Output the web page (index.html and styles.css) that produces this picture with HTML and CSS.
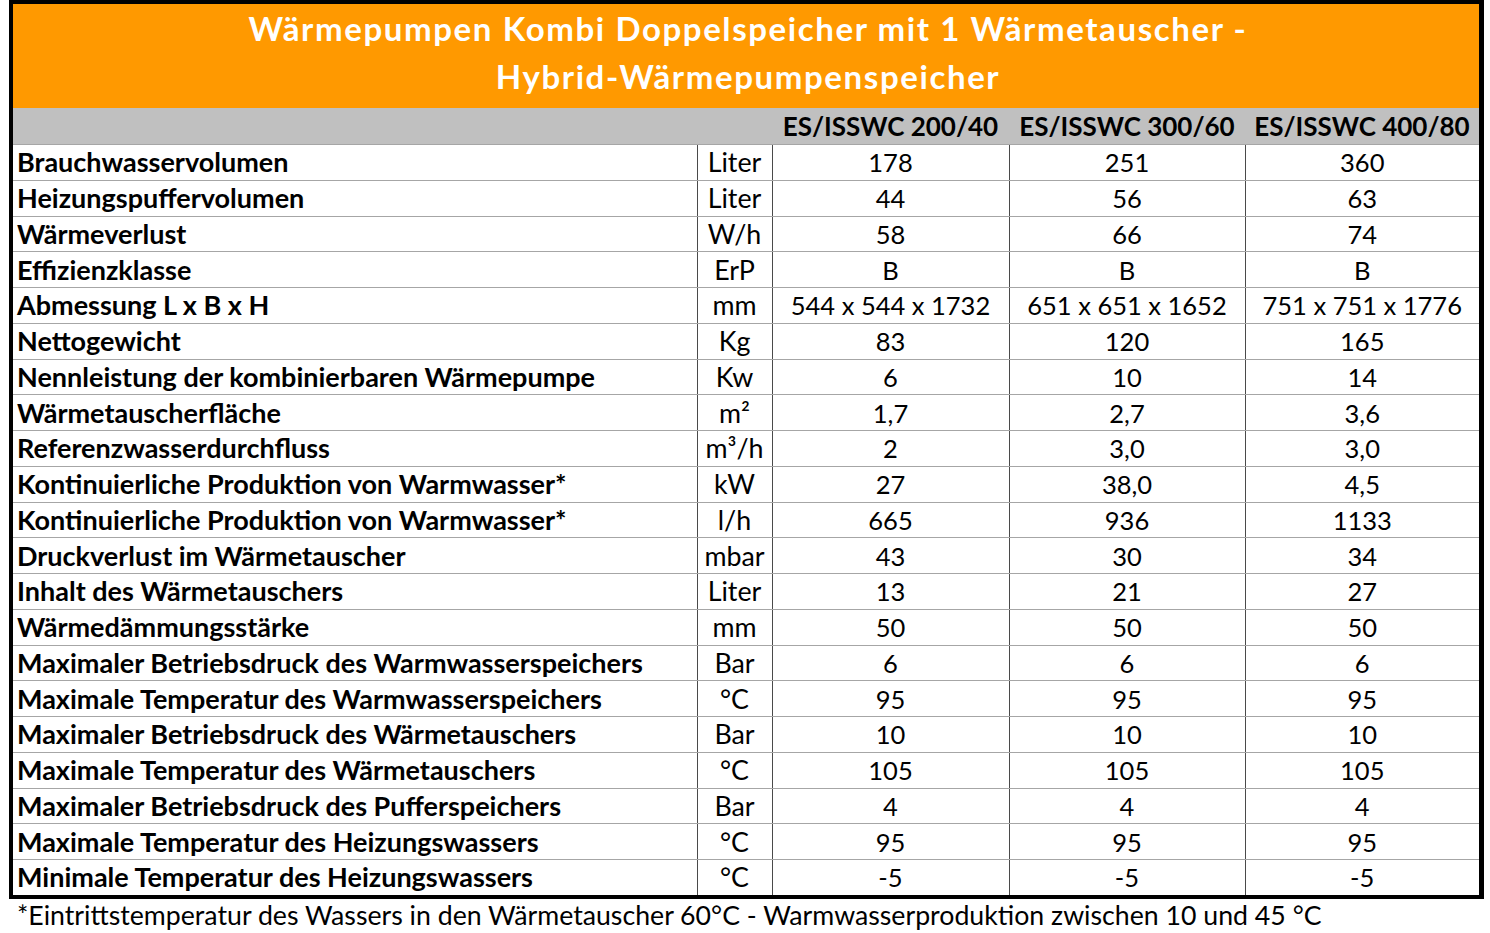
FILE: index.html
```html
<!DOCTYPE html>
<html lang="de">
<head>
<meta charset="utf-8">
<title>Wärmepumpen Kombi Doppelspeicher</title>
<link rel="stylesheet" href="styles.css">
</head>
<body>
<div class="sheet">
  <div class="frame">
    <div class="title">Wärmepumpen Kombi Doppelspeicher mit 1 Wärmetauscher -<br>Hybrid-Wärmepumpenspeicher</div>
    <table class="spec">
      <colgroup>
        <col class="c-label"><col class="c-unit"><col class="c-v1"><col class="c-v2"><col class="c-v3">
      </colgroup>
      <thead>
        <tr class="head">
          <th></th><th></th><th>ES/ISSWC 200/40</th><th>ES/ISSWC 300/60</th><th>ES/ISSWC 400/80</th>
        </tr>
      </thead>
      <tbody>
        <tr><td class="label">Brauchwasservolumen</td><td class="unit">Liter</td><td>178</td><td>251</td><td>360</td></tr>
        <tr><td class="label">Heizungspuffervolumen</td><td class="unit">Liter</td><td>44</td><td>56</td><td>63</td></tr>
        <tr><td class="label">Wärmeverlust</td><td class="unit">W/h</td><td>58</td><td>66</td><td>74</td></tr>
        <tr><td class="label">Effizienzklasse</td><td class="unit">ErP</td><td>B</td><td>B</td><td>B</td></tr>
        <tr><td class="label">Abmessung L x B x H</td><td class="unit">mm</td><td>544 x 544 x 1732</td><td>651 x 651 x 1652</td><td>751 x 751 x 1776</td></tr>
        <tr><td class="label">Nettogewicht</td><td class="unit">Kg</td><td>83</td><td>120</td><td>165</td></tr>
        <tr><td class="label">Nennleistung der kombinierbaren Wärmepumpe</td><td class="unit">Kw</td><td>6</td><td>10</td><td>14</td></tr>
        <tr><td class="label">Wärmetauscherfläche</td><td class="unit">m²</td><td>1,7</td><td>2,7</td><td>3,6</td></tr>
        <tr><td class="label">Referenzwasserdurchfluss</td><td class="unit">m³/h</td><td>2</td><td>3,0</td><td>3,0</td></tr>
        <tr><td class="label">Kontinuierliche Produktion von Warmwasser*</td><td class="unit">kW</td><td>27</td><td>38,0</td><td>4,5</td></tr>
        <tr><td class="label">Kontinuierliche Produktion von Warmwasser*</td><td class="unit">l/h</td><td>665</td><td>936</td><td>1133</td></tr>
        <tr><td class="label">Druckverlust im Wärmetauscher</td><td class="unit">mbar</td><td>43</td><td>30</td><td>34</td></tr>
        <tr><td class="label">Inhalt des Wärmetauschers</td><td class="unit">Liter</td><td>13</td><td>21</td><td>27</td></tr>
        <tr><td class="label">Wärmedämmungsstärke</td><td class="unit">mm</td><td>50</td><td>50</td><td>50</td></tr>
        <tr><td class="label">Maximaler Betriebsdruck des Warmwasserspeichers</td><td class="unit">Bar</td><td>6</td><td>6</td><td>6</td></tr>
        <tr><td class="label">Maximale Temperatur des Warmwasserspeichers</td><td class="unit">°C</td><td>95</td><td>95</td><td>95</td></tr>
        <tr><td class="label">Maximaler Betriebsdruck des Wärmetauschers</td><td class="unit">Bar</td><td>10</td><td>10</td><td>10</td></tr>
        <tr><td class="label">Maximale Temperatur des Wärmetauschers</td><td class="unit">°C</td><td>105</td><td>105</td><td>105</td></tr>
        <tr><td class="label">Maximaler Betriebsdruck des Pufferspeichers</td><td class="unit">Bar</td><td>4</td><td>4</td><td>4</td></tr>
        <tr><td class="label">Maximale Temperatur des Heizungswassers</td><td class="unit">°C</td><td>95</td><td>95</td><td>95</td></tr>
        <tr><td class="label">Minimale Temperatur des Heizungswassers</td><td class="unit">°C</td><td>-5</td><td>-5</td><td>-5</td></tr>
      </tbody>
    </table>
  </div>
  <p class="note">*Eintrittstemperatur des Wassers in den Wärmetauscher 60°C - Warmwasserproduktion zwischen 10 und 45 °C</p>
</div>
</body>
</html>
```
FILE: styles.css
```css
html, body {
  margin: 0;
  padding: 0;
  background: #ffffff;
}
body {
  font-family: "Lato", "Open Sans", "Liberation Sans", sans-serif;
  color: #000000;
  width: 1490px;
  height: 933px;
  overflow: hidden;
}
.sheet {
  padding: 0 7px 0 9px;
}
.frame {
  width: 1466px;
  border: 4px solid #000000;
  border-right-width: 5px;
  border-bottom-width: 4px;
  background: #ffffff;
}
.title {
  background: #ff9900;
  color: #ffffff;
  font-weight: 700;
  font-size: 33px;
  letter-spacing: 1.6px;
  line-height: 48px;
  text-align: center;
  height: 104px;
  box-sizing: border-box;
  padding-top: 0;
  padding-left: 4px;
}
.spec {
  width: 1466px;
  border-collapse: collapse;
  table-layout: fixed;
  font-size: 25.5px;
}
.c-label { width: 684px; }
.c-unit { width: 75px; }
.c-v1 { width: 237px; }
.c-v2 { width: 236px; }
.c-v3 { width: 234px; }
.head th {
  background: #c0c0c0;
  height: 36px;
  padding: 0;
  font-size: 26px;
  font-weight: 700;
  text-align: center;
  border-bottom: 1px solid #a6a6a6;
}
.spec td {
  height: 34.75px;
  padding: 0;
  text-align: center;
  border-bottom: 1px solid #a6a6a6;
  border-left: 1px solid #4a4a4a;
  line-height: 32px;
  white-space: nowrap;
}
.spec td.unit {
  font-size: 26.8px;
}
.spec tbody tr:last-child td {
  border-bottom: none;
}
.spec td.label {
  text-align: left;
  font-size: 27px;
  font-weight: 700;
  padding-left: 4px;
  border-left: none;
}
.note {
  margin: 0;
  padding-left: 8px;
  font-size: 26.7px;
  line-height: 33px;
}
```
